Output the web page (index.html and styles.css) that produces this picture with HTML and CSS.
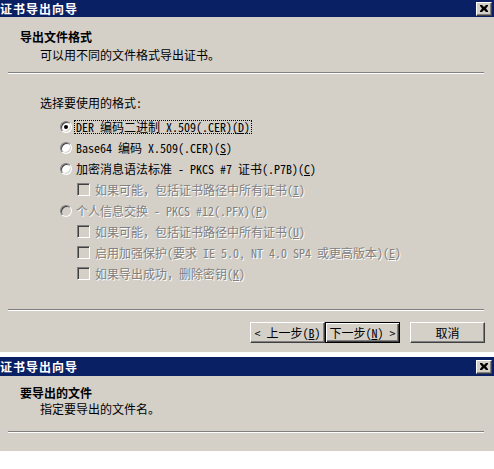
FILE: index.html
```html
<!DOCTYPE html>
<html lang="zh-CN">
<head>
    <meta charset="UTF-8">
    <meta name="viewport" content="width=device-width, initial-scale=1.0">
    <title>证书导出向导</title>
    <link rel="stylesheet" href="styles.css">
</head>
<body>
    <!-- Step: export file format -->
    <div class="dialog dialog-format">
        <div class="titlebar">
            <span class="title-text">证书导出向导</span>
            <span class="close-btn">
                <svg width="8" height="7" viewBox="0 0 8 7"><path d="M0 0h2l2 2 2-2h2v1l-2 2.5 2 2.5v1h-2l-2-2-2 2h-2v-1l2-2.5-2-2.5z" fill="#000"/></svg>
            </span>
        </div>

        <div class="header header-format">
            <div class="header-title">导出文件格式</div>
            <div class="header-sub sub-format">可以用不同的文件格式导出证书。</div>
        </div>
        <div class="separator"></div>

        <div class="content">
            <div class="prompt">选择要使用的格式:</div>

            <div class="row radio-row">
                <span class="radio checked"></span>
                <span class="focus">DER 编码二进制 X.509(.CER)(<u>D</u>)</span>
            </div>
            <div class="row radio-row">
                <span class="radio"></span>
                <span>Base64 编码 X.509(.CER)(<u>S</u>)</span>
            </div>
            <div class="row radio-row">
                <span class="radio"></span>
                <span>加密消息语法标准 - PKCS #7 证书(.P7B)(<u>C</u>)</span>
            </div>
            <div class="row check-row disabled">
                <span class="check"></span>
                <span>如果可能，包括证书路径中所有证书(<u>I</u>)</span>
            </div>
            <div class="row radio-row disabled">
                <span class="radio"></span>
                <span>个人信息交换 - PKCS #12(.PFX)(<u>P</u>)</span>
            </div>
            <div class="row check-row disabled">
                <span class="check"></span>
                <span>如果可能，包括证书路径中所有证书(<u>U</u>)</span>
            </div>
            <div class="row check-row disabled">
                <span class="check"></span>
                <span>启用加强保护(要求 IE 5.0, NT 4.0 SP4 或更高版本)(<u>E</u>)</span>
            </div>
            <div class="row check-row disabled">
                <span class="check"></span>
                <span>如果导出成功，删除密钥(<u>K</u>)</span>
            </div>
        </div>

        <div class="separator"></div>
        <div class="buttons">
            <button class="btn">&lt; 上一步(<u>B</u>)</button>
            <button class="btn btn-default">下一步(<u>N</u>) &gt;</button>
            <button class="btn btn-cancel">取消</button>
        </div>
    </div>

    <!-- Step: file to export -->
    <div class="dialog dialog-file">
        <div class="titlebar titlebar-file">
            <span class="title-text">证书导出向导</span>
            <span class="close-btn">
                <svg width="8" height="7" viewBox="0 0 8 7"><path d="M0 0h2l2 2 2-2h2v1l-2 2.5 2 2.5v1h-2l-2-2-2 2h-2v-1l2-2.5-2-2.5z" fill="#000"/></svg>
            </span>
        </div>

        <div class="header header-file">
            <div class="header-title">要导出的文件</div>
            <div class="header-sub">指定要导出的文件名。</div>
        </div>
        <div class="separator"></div>
    </div>
</body>
</html>
```

FILE: styles.css
```css
body {
    margin: 0;
    background: #fff;
    width: 494px;
    overflow: hidden;
    font-family: "Noto Sans Mono CJK SC", "Noto Sans CJK SC", sans-serif;
    font-size: 12px;
    color: #000;
}

u {
    text-decoration: underline;
    text-underline-offset: 1px;
}

.dialog {
    background: #d4d0c8;
    overflow: hidden;
}

.dialog-format {
    height: 352px;
    margin-bottom: 5px;
}

.dialog-file {
    height: 94px;
}

/* Title bar */
.titlebar {
    height: 17px;
    background: #0a2064;
    display: flex;
    align-items: center;
    justify-content: space-between;
    padding: 0 2px 0 0;
}

.titlebar-file {
    height: 19px;
}

.title-text {
    color: #fff;
    font-weight: bold;
    font-family: "Noto Sans CJK SC", sans-serif;
    line-height: 17px;
    letter-spacing: 1px;
}

.close-btn {
    width: 14px;
    height: 12px;
    background: #d4d0c8;
    border: 1px solid;
    border-color: #fff #404040 #404040 #fff;
    box-shadow: inset -1px -1px 0 #808080;
    display: flex;
    align-items: center;
    justify-content: center;
}

/* Header */
.header {
    padding-left: 20px;
}

.header-format {
    padding-top: 12px;
    height: 43px;
}

.header-file {
    padding-top: 9px;
    height: 46px;
}

.header-title {
    font-weight: bold;
    font-family: "Noto Sans CJK SC", sans-serif;
    line-height: 16px;
}

.header-sub {
    padding-left: 20px;
    line-height: 16px;
}

.sub-format {
    margin-top: 2px;
}

.separator {
    height: 0;
    margin: 0 10px 0 8px;
    border-top: 1px solid #808080;
    border-bottom: 1px solid #fff;
}

/* Options */
.content {
    padding: 18px 0 0 40px;
    height: 217px;
}

.prompt {
    line-height: 21px;
    margin-bottom: 3px;
}

.row {
    height: 21px;
    display: flex;
    align-items: center;
    white-space: nowrap;
}

.radio-row {
    padding-left: 20px;
    gap: 4px;
}

.check-row {
    padding-left: 37px;
    gap: 5px;
}

.disabled {
    color: #808080;
    text-shadow: 1px 1px 0 #fff;
}

.radio {
    width: 10px;
    height: 10px;
    border-radius: 50%;
    border: 1px solid;
    border-color: #808080 #fff #fff #808080;
    background: #fff;
    box-shadow: inset 1px 1px 0 #404040, inset -1px -1px 0 #d4d0c8;
    position: relative;
    flex: none;
}

.radio.checked::after {
    content: "";
    position: absolute;
    left: 3px;
    top: 3px;
    width: 4px;
    height: 4px;
    border-radius: 50%;
    background: #000;
}

.disabled .radio {
    background: #d4d0c8;
}

.check {
    width: 11px;
    height: 11px;
    border: 1px solid;
    border-color: #808080 #fff #fff #808080;
    background: #d4d0c8;
    box-shadow: inset 1px 1px 0 #404040, inset -1px -1px 0 #d4d0c8;
    flex: none;
}

.focus {
    border: 1px dotted #000;
    line-height: 12px;
    padding: 0 1px;
    margin-left: -2px;
}

/* Buttons */
.buttons {
    display: flex;
    justify-content: flex-end;
    padding: 11px 9px 0 0;
}

.btn {
    width: 75px;
    height: 21px;
    margin: 0;
    padding: 0;
    font-family: inherit;
    font-size: 12px;
    color: #000;
    background: #d4d0c8;
    border: 1px solid;
    border-color: #fff #404040 #404040 #fff;
    box-shadow: inset -1px -1px 0 #808080;
}

.btn-default {
    border: 1px solid #000;
    box-shadow: inset 1px 1px 0 #fff, inset -1px -1px 0 #404040, inset -2px -2px 0 #808080;
}

.btn-cancel {
    margin-left: 10px;
}
```
